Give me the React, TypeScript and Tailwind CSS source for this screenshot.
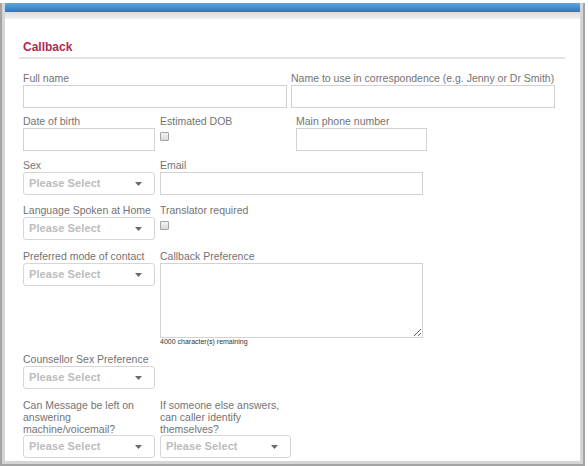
import { FC, ReactNode } from "react";

const labelCls = "text-[10.5px] text-[#737373] whitespace-nowrap";

const Label: FC<{ children: ReactNode }> = ({ children }) => (
  <div className={`${labelCls} leading-[13px]`}>{children}</div>
);

const TextBox: FC<{ w: string }> = ({ w }) => (
  <input
    type="text"
    className={`${w} h-[23px] border border-[#d2d2d2] bg-white outline-none block`}
  />
);

const CheckBox = () => (
  <div className="mt-[4px] w-[9px] h-[9px] border border-[#a3a3a3] rounded-[1px] bg-gradient-to-b from-[#f2f2f2] to-[#dadada]" />
);

const SelectBox: FC<{ w?: string }> = ({ w = "w-[132px]" }) => (
  <div
    className={`${w} h-[23px] border border-[#d6d6d6] rounded-[3px] bg-white flex items-center justify-between pl-[5px] pr-[12px]`}
  >
    <span className="text-[11px] font-bold tracking-[0.1px] text-[#bcbcbc]">
      Please Select
    </span>
    <svg width="7" height="4" viewBox="0 0 7 4">
      <path d="M0 0 L7 0 L3.5 4 Z" fill="#6a6a6a" />
    </svg>
  </div>
);

export default function App() {
  return (
    <div className="w-[588px] h-[466px] bg-white overflow-hidden pt-[3px] font-['Liberation_Sans',Arial,sans-serif]">
      <div className="w-[585px] h-[463px] border-l-2 border-r-2 border-b-2 border-[#a4a4a4]">
        <div className="h-full border-l-[3px] border-r-[3px] border-b-[3px] border-[#d5d5d5] flex flex-col">
          <div className="h-[9px] bg-gradient-to-b from-[#5ea6df] to-[#2a78c1]" />
          <div className="h-[7px] bg-gradient-to-b from-[#dedede] to-[#efefef]" />

          <div className="pl-[14px]">
            <div className="mt-[20px] w-[546px] pl-[4px] pb-[2px] border-b-2 border-[#e3e3e3]">
              <h2 className="text-[12px] leading-[16px] font-bold text-[#b1294f]">
                Callback
              </h2>
            </div>

            <div className="pl-[4px]">
              {/* names */}
              <div className="mt-[13px] flex gap-[4px]">
                <div>
                  <Label>Full name</Label>
                  <TextBox w="w-[264px]" />
                </div>
                <div>
                  <Label>Name to use in correspondence (e.g. Jenny or Dr Smith)</Label>
                  <TextBox w="w-[264px]" />
                </div>
              </div>

              {/* dob */}
              <div className="mt-[7px] flex">
                <div className="w-[137px]">
                  <Label>Date of birth</Label>
                  <TextBox w="w-[132px]" />
                </div>
                <div className="w-[136px]">
                  <Label>Estimated DOB</Label>
                  <CheckBox />
                </div>
                <div>
                  <Label>Main phone number</Label>
                  <TextBox w="w-[131px]" />
                </div>
              </div>

              {/* sex / email */}
              <div className="mt-[8px] flex">
                <div className="w-[137px]">
                  <Label>Sex</Label>
                  <SelectBox />
                </div>
                <div>
                  <Label>Email</Label>
                  <TextBox w="w-[263px]" />
                </div>
              </div>

              {/* language */}
              <div className="mt-[9px] flex">
                <div className="w-[137px]">
                  <Label>Language Spoken at Home</Label>
                  <SelectBox />
                </div>
                <div>
                  <Label>Translator required</Label>
                  <CheckBox />
                </div>
              </div>

              {/* contact */}
              <div className="mt-[10px] flex">
                <div className="w-[137px]">
                  <Label>Preferred mode of contact</Label>
                  <SelectBox />
                </div>
                <div>
                  <Label>Callback Preference</Label>
                  <textarea className="block w-[263px] h-[75px] border border-[#d2d2d2] bg-white outline-none" />
                  <div className="text-[7px] leading-[8px] text-[#333]">
                    4000 character(s) remaining
                  </div>
                </div>
              </div>

              {/* counsellor */}
              <div className="mt-[7px]">
                <Label>Counsellor Sex Preference</Label>
                <SelectBox />
              </div>

              {/* message */}
              <div className="mt-[10px] flex">
                <div className="w-[137px]">
                  <div className={`${labelCls} leading-[12px]`}>
                    Can Message be left on
                    <br />
                    answering
                    <br />
                    machine/voicemail?
                  </div>
                  <SelectBox />
                </div>
                <div>
                  <div className={`${labelCls} leading-[12px]`}>
                    If someone else answers,
                    <br />
                    can caller identify
                    <br />
                    themselves?
                  </div>
                  <SelectBox w="w-[131px]" />
                </div>
              </div>
            </div>
          </div>
        </div>
      </div>
    </div>
  );
}
